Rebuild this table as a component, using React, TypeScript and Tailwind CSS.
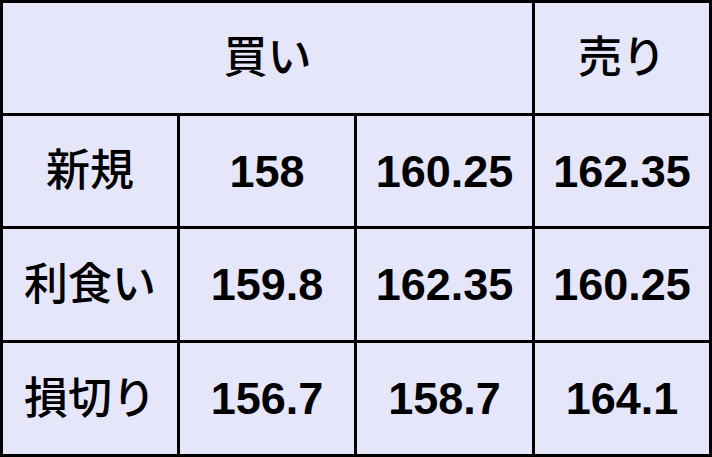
const rows = [
  ["新規", "158", "160.25", "162.35"],
  ["利食い", "159.8", "162.35", "160.25"],
  ["損切り", "156.7", "158.7", "164.1"],
];

const cell = "flex items-center justify-center bg-[#e6e6fa] text-black leading-none";
const num = `${cell} text-[45px] font-bold`;
const jp = `${cell} text-[44px] font-medium`;

export default function App() {
  return (
    <div
      className="grid h-[457px] w-[712px] grid-cols-[174px_174px_175px_174px] grid-rows-[110px_110px_111px_111px] gap-[3px] bg-black p-[3px]"
      style={{ fontFamily: '"Liberation Sans", "Noto Sans CJK JP", sans-serif' }}
    >
      <div className={`${jp} col-span-3`}>買い</div>
      <div className={jp}>売り</div>
      {rows.map((r) =>
        r.map((v, i) => (
          <div key={r[0] + i} className={i === 0 ? jp : num}>
            {v}
          </div>
        ))
      )}
    </div>
  );
}
